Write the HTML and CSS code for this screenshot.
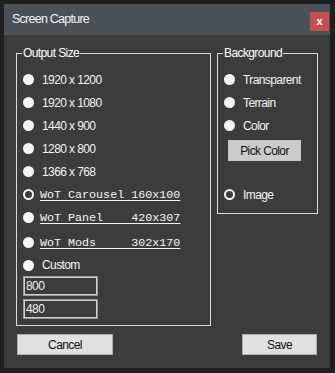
FILE: index.html
```html
<!DOCTYPE html>
<html lang="en">
<head>
  <meta charset="UTF-8" />
  <title>Screen Capture</title>
  <link rel="stylesheet" href="styles.css">
</head>
<body>
  <div class="window">
    <div class="titlebar">
      <span class="title">Screen Capture</span>
      <button class="close-button">x</button>
    </div>

    <div class="content">
      <div class="groups">
        <fieldset class="group output-group">
          <legend>Output Size</legend>
          <label class="option"><span class="radio"></span>1920 x 1200</label>
          <label class="option"><span class="radio"></span>1920 x 1080</label>
          <label class="option"><span class="radio"></span>1440 x 900</label>
          <label class="option"><span class="radio"></span>1280 x 800</label>
          <label class="option"><span class="radio"></span>1366 x 768</label>
          <label class="option mono"><span class="radio checked"></span><span class="link">WoT Carousel 160x100</span></label>
          <label class="option mono"><span class="radio"></span><span class="link">WoT Panel    420x307</span></label>
          <label class="option mono spaced"><span class="radio"></span><span class="link">WoT Mods     302x170</span></label>
          <label class="option custom"><span class="radio"></span>Custom</label>
          <input class="size-input" type="text" value="800">
          <input class="size-input" type="text" value="480">
        </fieldset>

        <fieldset class="group background-group">
          <legend>Background</legend>
          <label class="option"><span class="radio"></span>Transparent</label>
          <label class="option"><span class="radio"></span>Terrain</label>
          <label class="option"><span class="radio"></span>Color</label>
          <button class="pick-button">Pick Color</button>
          <label class="option image-option"><span class="radio checked"></span>Image</label>
        </fieldset>
      </div>

      <div class="actions">
        <button class="action-button cancel">Cancel</button>
        <button class="action-button save">Save</button>
      </div>
    </div>
  </div>
</body>
</html>
```

FILE: styles.css
```css
body {
  margin: 0;
  padding: 4px;
  background: #1f1f1f;
  font-family: "Liberation Sans", Arial, sans-serif;
  font-size: 12px;
  letter-spacing: -0.6px;
  color: #fff;
}

.window {
  width: 326px;
  height: 364px;
  background: #3c3c3c;
}

.titlebar {
  height: 31px;
  background: #4a5157;
  display: flex;
  align-items: flex-start;
  justify-content: space-between;
}

.title {
  margin: 8px 0 0 8px;
  line-height: 15px;
  font-size: 12.5px;
  letter-spacing: -0.75px;
  color: #f2f2f2;
}

.close-button {
  width: 19px;
  height: 19px;
  margin: 8px 1px 0 0;
  padding: 0;
  border: none;
  background: #c64f50;
  color: #fff;
  font-family: "Liberation Sans", Arial, sans-serif;
  font-weight: bold;
  font-size: 11px;
  letter-spacing: 0;
  line-height: 17px;
}

.content {
  padding: 11px 12px 0 12px;
}

.groups {
  display: flex;
  align-items: flex-start;
  gap: 6px;
}

.group {
  margin: 0;
  border: 1px solid #dcdcdc;
  padding: 8px 0 6px 6px;
  box-sizing: border-box;
  min-width: 0;
}

.group legend {
  padding: 0 1px;
  margin-left: -1px;
  line-height: 14px;
  color: #fff;
}

.output-group {
  width: 195px;
  height: 280px;
}

.background-group {
  width: 101px;
  height: 168px;
}

.option {
  display: flex;
  align-items: center;
  gap: 8px;
  height: 23px;
  white-space: pre;
  color: #f4f4f4;
}

.option.mono {
  gap: 6px;
}

.option.spaced {
  height: 25px;
  padding-top: 2px;
  box-sizing: border-box;
}

.option.custom {
  height: 22px;
}

.radio {
  width: 11px;
  height: 11px;
  border-radius: 50%;
  background: #f5f5f5;
  box-sizing: border-box;
  flex-shrink: 0;
}

.radio.checked {
  background: #3c3c3c;
  border: 2px solid #f5f5f5;
}

.link {
  font-family: "Liberation Mono", "DejaVu Sans Mono", monospace;
  font-size: 11.7px;
  letter-spacing: 0;
  text-decoration: underline;
  text-underline-offset: 2px;
}

.size-input {
  display: block;
  width: 75px;
  height: 20px;
  margin: 0 0 3px 0;
  padding: 0 2px;
  box-sizing: border-box;
  border: 1px solid #9a9a9a;
  box-shadow: inset 0 0 0 1px #d0d0d0;
  background: #3c3c3c;
  color: #f0f0f0;
  font-family: inherit;
  font-size: 12px;
  letter-spacing: inherit;
  outline: none;
}

.pick-button {
  display: block;
  width: 73px;
  height: 21px;
  margin: 3px 0 0 4px;
  padding: 0;
  border: 1px solid #c4c4c4;
  background: #cccccc;
  color: #111;
  font-family: inherit;
  font-size: 12px;
  letter-spacing: inherit;
}

.image-option {
  margin-top: 22px;
}

.actions {
  display: flex;
  justify-content: space-between;
  margin-top: 8px;
  padding: 0 1px;
}

.action-button {
  height: 21px;
  padding: 0;
  border: 1px solid #adadad;
  background: #e1e1e1;
  color: #111;
  font-family: inherit;
  font-size: 12px;
  letter-spacing: inherit;
}

.cancel {
  width: 96px;
}

.save {
  width: 75px;
}
```
